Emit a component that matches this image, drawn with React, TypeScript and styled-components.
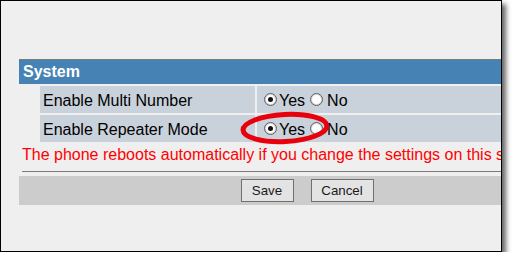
import React from "react";
import styled, { createGlobalStyle } from "styled-components";

const Global = createGlobalStyle`
  html, body { margin: 0; padding: 0; background: #ffffff; }
  body { font-family: "Liberation Sans", Arial, sans-serif; }
`;

const Frame = styled.div`
  position: relative;
  box-sizing: border-box;
  width: 502px;
  height: 252px;
  border: 1px solid #000;
  background: #efefef;
  overflow: hidden;
  box-shadow: 4px 4px 5px rgba(0, 0, 0, 0.6);
`;

const Page = styled.div`
  box-sizing: border-box;
  width: 594px;
  padding: 58px 0 0 18px;
`;

const Section = styled.div`
  display: flex;
  flex-direction: column;
`;

const Rule = styled.div<{ $inset?: number; $top?: number }>`
  height: 1px;
  background: #7b7b7b;
  margin-left: ${(p) => p.$inset ?? 0}px;
  margin-top: ${(p) => p.$top ?? 0}px;
`;

const Header = styled.div`
  height: 24px;
  line-height: 24px;
  background: #4682b4;
  color: #ffffff;
  font-weight: bold;
  font-size: 16px;
  padding-left: 4px;
`;

const Rows = styled.div`
  display: flex;
  flex-direction: column;
  gap: 2px;
  margin-top: 2px;
`;

const Row = styled.div`
  display: grid;
  grid-template-columns: 215px 1fr;
  column-gap: 2px;
  padding-left: 21px;
`;

const Cell = styled.div`
  box-sizing: border-box;
  height: 27px;
  padding-top: 2px;
  line-height: 25px;
  background: #c9d1db;
  font-size: 16px;
  color: #000;
  white-space: nowrap;
`;

const LabelCell = styled(Cell)`
  padding-left: 3px;
`;

const ValueCell = styled(Cell)`
  display: flex;
  align-items: center;
  padding-left: 7px;
`;

const Radio = styled.span<{ $checked?: boolean; $gap: number }>`
  position: relative;
  box-sizing: border-box;
  width: 13px;
  height: 13px;
  margin-top: -2px;
  margin-right: ${(p) => p.$gap}px;
  border-radius: 50%;
  border: 1px solid #5e5e5e;
  background: #ffffff;
  box-shadow: inset 0 0 0 1px #d4d4d4;
  flex: none;
  &::after {
    content: "";
    display: ${(p) => (p.$checked ? "block" : "none")};
    position: absolute;
    left: 3px;
    top: 3px;
    width: 5px;
    height: 5px;
    border-radius: 50%;
    background: #111;
  }
`;

const OptionText = styled.span<{ $after: number }>`
  margin-right: ${(p) => p.$after}px;
`;

const Notice = styled.div`
  margin-top: 4px;
  padding-left: 3px;
  height: 18px;
  line-height: 18px;
  font-size: 16px;
  color: #ff0000;
  white-space: nowrap;
`;

const ButtonBar = styled.div`
  margin-top: 4px;
  height: 29px;
  background: #cccccc;
  display: flex;
  align-items: center;
  justify-content: center;
  gap: 17px;
`;

const Button = styled.button<{ $w: number }>`
  box-sizing: border-box;
  width: ${(p) => p.$w}px;
  height: 23px;
  margin: 0;
  padding: 0;
  border: 1px solid #707070;
  border-radius: 0;
  background: linear-gradient(#f2f2f2 0%, #ebebeb 50%, #dddddd 51%, #cfcfcf 100%);
  background: #e3e3e3;
  font-family: "Liberation Sans", Arial, sans-serif;
  font-size: 13.33px;
  color: #1a1a1a;
`;

const Annotation = styled.svg`
  position: absolute;
  left: 237px;
  top: 108px;
  overflow: visible;
`;

function YesNo() {
  return (
    <ValueCell>
      <Radio $checked $gap={2} />
      <OptionText $after={5}>Yes</OptionText>
      <Radio $gap={4} />
      <OptionText $after={0}>No</OptionText>
    </ValueCell>
  );
}

export default function App() {
  return (
    <>
      <Global />
      <Frame>
        <Page>
          <Section>
            <Rule />
            <Header>System</Header>
            <Rows>
              <Row>
                <LabelCell>Enable Multi Number</LabelCell>
                <YesNo />
              </Row>
              <Row>
                <LabelCell>Enable Repeater Mode</LabelCell>
                <YesNo />
              </Row>
            </Rows>
            <Notice>
              The phone reboots automatically if you change the settings on this screen.
            </Notice>
            <Rule $inset={3} $top={7} />
            <ButtonBar>
              <Button $w={53}>Save</Button>
              <Button $w={63}>Cancel</Button>
            </ButtonBar>
          </Section>
        </Page>
        <Annotation width="94" height="36" viewBox="0 0 94 36">
          <ellipse
            cx="47"
            cy="19"
            rx="42"
            ry="13.5"
            fill="none"
            stroke="#e8000c"
            strokeWidth="5"
            transform="rotate(-3 47 19)"
          />
        </Annotation>
      </Frame>
    </>
  );
}
